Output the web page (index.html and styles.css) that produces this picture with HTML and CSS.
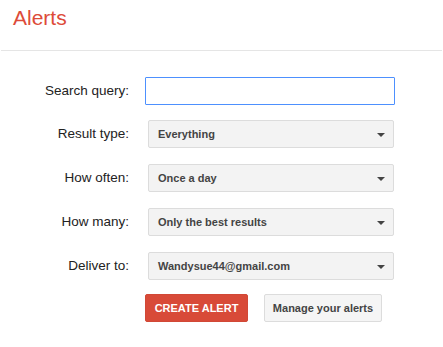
FILE: index.html
```html
<!DOCTYPE html>
<html lang="en">
<head>
  <meta charset="UTF-8" />
  <title>Alerts</title>
  <link rel="stylesheet" href="styles.css">
</head>
<body>

  <header class="top-bar">
    <h1>Alerts</h1>
  </header>

  <div class="alert-form">
    <div class="row first">
      <label class="label" for="query">Search query:</label>
      <input id="query" class="query" type="text" />
    </div>
    <div class="row">
      <span class="label">Result type:</span>
      <div class="dropdown"><span>Everything</span><i class="arrow"></i></div>
    </div>
    <div class="row">
      <span class="label">How often:</span>
      <div class="dropdown"><span>Once a day</span><i class="arrow"></i></div>
    </div>
    <div class="row">
      <span class="label">How many:</span>
      <div class="dropdown"><span>Only the best results</span><i class="arrow"></i></div>
    </div>
    <div class="row">
      <span class="label">Deliver to:</span>
      <div class="dropdown"><span>Wandysue44@gmail.com</span><i class="arrow"></i></div>
    </div>
    <div class="actions">
      <button class="btn btn-red">CREATE ALERT</button>
      <button class="btn btn-grey">Manage your alerts</button>
    </div>
  </div>

</body>
</html>
```

FILE: styles.css
```css
body {
  margin: 0;
  font-family: Arial, "Liberation Sans", sans-serif;
  background: #fff;
  color: #222;
}
.top-bar {
  height: 51px;
  box-sizing: border-box;
  padding: 6px 0 0 12px;
  border-bottom: 1px solid #e5e5e5;
  margin: 0 1px;
}
.top-bar h1 {
  margin: 0;
  font-size: 21px;
  line-height: 24px;
  font-weight: normal;
  color: #dd4b39;
}
.alert-form {
  padding-top: 26px;
}
.row {
  display: flex;
  align-items: center;
  height: 28px;
  margin-bottom: 16px;
}
.row.first {
  margin-bottom: 15px;
}
.label {
  width: 129px;
  text-align: right;
  font-size: 13.5px;
  line-height: 16px;
  color: #222;
  margin-right: 16px;
}
.query {
  width: 250px;
  height: 28px;
  box-sizing: border-box;
  border: 1px solid #4d90fe;
  border-radius: 1px;
  outline: none;
  padding: 0 8px;
  margin: 0;
  font-size: 13px;
}
.dropdown {
  margin-left: 3px;
  width: 246px;
  height: 28px;
  box-sizing: border-box;
  border: 1px solid #dcdcdc;
  border-radius: 2px;
  background: #f3f3f3;
  display: flex;
  align-items: center;
  justify-content: space-between;
  padding: 0 8px 0 9px;
  font-size: 11px;
  font-weight: bold;
  color: #444;
}
.arrow {
  width: 0;
  height: 0;
  border-left: 4px solid transparent;
  border-right: 4px solid transparent;
  border-top: 4px solid #444;
  margin-top: 1px;
}
.actions {
  display: flex;
  gap: 16px;
  margin: -2px 0 0 145px;
}
.btn {
  height: 28px;
  box-sizing: border-box;
  border-radius: 2px;
  font-family: Arial, "Liberation Sans", sans-serif;
  font-size: 11px;
  font-weight: bold;
  cursor: pointer;
}
.btn-red {
  width: 103px;
  background: #d84a38;
  border: 1px solid #d14836;
  color: #fff;
}
.btn-grey {
  width: 118px;
  background: #f5f5f5;
  border: 1px solid #dcdcdc;
  color: #444;
}
```
